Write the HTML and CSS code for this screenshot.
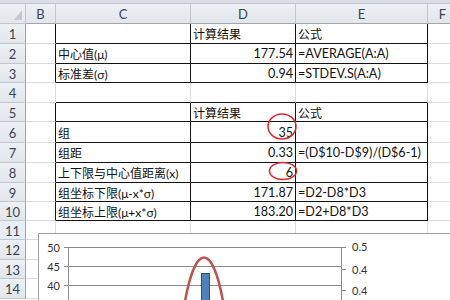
FILE: index.html
```html
<!DOCTYPE html>
<html>
<head>
<meta charset="utf-8">
<link rel="stylesheet" href="styles.css">
</head>
<body>
<div class="sheet">
  <div class="topbar"></div>
  <div class="grid">
    <div class="hd corner"><span class="tri"></span></div>
    <div class="hd col">B</div>
    <div class="hd col">C</div>
    <div class="hd col">D</div>
    <div class="hd col">E</div>
    <div class="hd col">F</div>

    <div class="hd row">1</div>
    <div class="c bR"></div>
    <div class="c bR bB"></div>
    <div class="c bR bB">计算结果</div>
    <div class="c bR bB">公式</div>
    <div class="c"></div>

    <div class="hd row">2</div>
    <div class="c bR"></div>
    <div class="c bR bB">中心值(μ)</div>
    <div class="c bR bB num">177.54</div>
    <div class="c bR bB"><span class="lat">=AVERAGE(A:A)</span></div>
    <div class="c"></div>

    <div class="hd row">3</div>
    <div class="c bR"></div>
    <div class="c bR bB">标准差(σ)</div>
    <div class="c bR bB num">0.94</div>
    <div class="c bR bB"><span class="lat">=STDEV.S(A:A)</span></div>
    <div class="c"></div>

    <div class="hd row">4</div>
    <div class="c"></div>
    <div class="c bB"></div>
    <div class="c bB"></div>
    <div class="c bB"></div>
    <div class="c"></div>

    <div class="hd row">5</div>
    <div class="c bR"></div>
    <div class="c bR bB"></div>
    <div class="c bR bB">计算结果</div>
    <div class="c bR bB">公式</div>
    <div class="c"></div>

    <div class="hd row">6</div>
    <div class="c bR"></div>
    <div class="c bR bB">组</div>
    <div class="c bR bB num">35</div>
    <div class="c bR bB"></div>
    <div class="c"></div>

    <div class="hd row">7</div>
    <div class="c bR"></div>
    <div class="c bR bB">组距</div>
    <div class="c bR bB num">0.33</div>
    <div class="c bR bB"><span class="lat">=(D$10-D$9)/(D$6-1)</span></div>
    <div class="c"></div>

    <div class="hd row">8</div>
    <div class="c bR"></div>
    <div class="c bR bB">上下限与中心值距离(x)</div>
    <div class="c bR bB num">6</div>
    <div class="c bR bB"></div>
    <div class="c"></div>

    <div class="hd row">9</div>
    <div class="c bR"></div>
    <div class="c bR bB">组坐标下限(μ-x*σ)</div>
    <div class="c bR bB num">171.87</div>
    <div class="c bR bB"><span class="lat">=D2-D8*D3</span></div>
    <div class="c"></div>

    <div class="hd row">10</div>
    <div class="c bR"></div>
    <div class="c bR bB">组坐标上限(μ+x*σ)</div>
    <div class="c bR bB num">183.20</div>
    <div class="c bR bB"><span class="lat">=D2+D8*D3</span></div>
    <div class="c"></div>

    <div class="hd row light">11</div>
    <div class="c"></div>
    <div class="c"></div>
    <div class="c"></div>
    <div class="c"></div>
    <div class="c"></div>

    <div class="hd row">12</div>
    <div class="c"></div>
    <div class="c"></div>
    <div class="c"></div>
    <div class="c"></div>
    <div class="c"></div>

    <div class="hd row">13</div>
    <div class="c"></div>
    <div class="c"></div>
    <div class="c"></div>
    <div class="c"></div>
    <div class="c"></div>

    <div class="hd row">14</div>
    <div class="c"></div>
    <div class="c"></div>
    <div class="c"></div>
    <div class="c"></div>
    <div class="c"></div>
  </div>

  <div class="chart">
    <svg class="chart-svg" width="420" height="80" viewBox="0 0 420 80">
      <g class="grid-lines">
        <line x1="26" y1="14.5" x2="303" y2="14.5"/>
        <line x1="26" y1="33.5" x2="303" y2="33.5"/>
        <line x1="26" y1="52.5" x2="303" y2="52.5"/>
        <line x1="30.5" y1="14" x2="30.5" y2="80"/>
        <line x1="303.5" y1="14" x2="303.5" y2="80"/>
        <line x1="303" y1="14.5" x2="308" y2="14.5"/>
        <line x1="303" y1="36.5" x2="308" y2="36.5"/>
        <line x1="303" y1="57.5" x2="308" y2="57.5"/>
      </g>
      <g class="labels">
        <text x="22" y="18.5" text-anchor="end">50</text>
        <text x="22" y="37.5" text-anchor="end">45</text>
        <text x="22" y="56.5" text-anchor="end">40</text>
        <text x="314" y="18">0.5</text>
        <text x="314" y="40.5">0.4</text>
        <text x="314" y="61.5">0.4</text>
      </g>
      <rect class="bar" x="163.5" y="40.5" width="8" height="45"/>
      <path class="curve" d="M 146 74 C 157 8, 175 8, 186 74"/>
    </svg>
  </div>

  <svg class="marks" width="450" height="300" viewBox="0 0 450 300">
    <ellipse cx="282" cy="126.5" rx="14" ry="12.5"/>
    <ellipse cx="283" cy="171" rx="13.5" ry="8.5"/>
  </svg>
</div>
</body>
</html>
```

FILE: styles.css
```css
html, body {
  margin: 0;
  padding: 0;
  background: #ffffff;
}

.sheet {
  position: relative;
  width: 450px;
  height: 300px;
  overflow: hidden;
  font-family: Lato, "Noto Sans CJK SC", sans-serif;
  font-size: 12px;
  color: #111;
}

.topbar {
  height: 4px;
  background: #dadee4;
  box-sizing: border-box;
  border-bottom: 1px solid #c3c8cf;
}

.grid {
  display: grid;
  grid-template-columns: 26px 30px 135px 105px 132px 30px;
  grid-template-rows: 20px 20px 20px 19px 20px 19px 21px 20px 20px 19px 19px 19px 20px 19px 20px;
}

.grid > div {
  box-sizing: border-box;
  border-right: 1px solid #d9dbde;
  border-bottom: 1px solid #d9dbde;
  display: flex;
  align-items: center;
  white-space: nowrap;
  overflow: visible;
}

.hd {
  background: linear-gradient(#edf0f4, #e2e6eb);
  color: #3c4450;
  justify-content: center;
  font-family: Lato, sans-serif;
  font-size: 13px;
}

.grid > .hd {
  border-right: 1px solid #c2c7cf;
  border-bottom: 1px solid #c2c7cf;
}

.grid > .col {
  border-bottom: 1px solid #9ea6b1;
}

.grid > .row {
  border-right: 1px solid #9ea6b1;
  padding-top: 1px;
}

.grid > .light {
  background: #e9eef6;
}

.corner {
  position: relative;
}

.tri {
  position: absolute;
  right: 3px;
  bottom: 3px;
  width: 0;
  height: 0;
  border-left: 8px solid transparent;
  border-bottom: 10px solid #c3c8cf;
}

.c {
  padding: 0 2px;
}

.lat {
  font-size: 12.6px;
}

.num {
  justify-content: flex-end;
  font-size: 12.6px;
}

.grid > .bR {
  border-right: 1px solid #111;
}

.grid > .bB {
  border-bottom: 1px solid #111;
}

.chart {
  position: absolute;
  left: 38px;
  top: 233px;
  width: 440px;
  height: 90px;
  background: #ffffff;
  border: 1px solid #a3a3a3;
  box-sizing: border-box;
}

.chart-svg {
  position: absolute;
  left: -1px;
  top: -1px;
}

.grid-lines line {
  stroke: #8a8a8a;
  stroke-width: 1;
  shape-rendering: crispEdges;
}

.labels text {
  font-family: Lato, sans-serif;
  font-size: 11px;
  fill: #333;
}

.bar {
  fill: #4f81bd;
  stroke: #2d4f7a;
  stroke-width: 1;
}

.curve {
  fill: none;
  stroke: #c0504d;
  stroke-width: 2.5;
}

.marks {
  position: absolute;
  left: 0;
  top: 0;
  pointer-events: none;
}

.marks ellipse {
  fill: none;
  stroke: #e0252b;
  stroke-width: 1.5;
}
```
